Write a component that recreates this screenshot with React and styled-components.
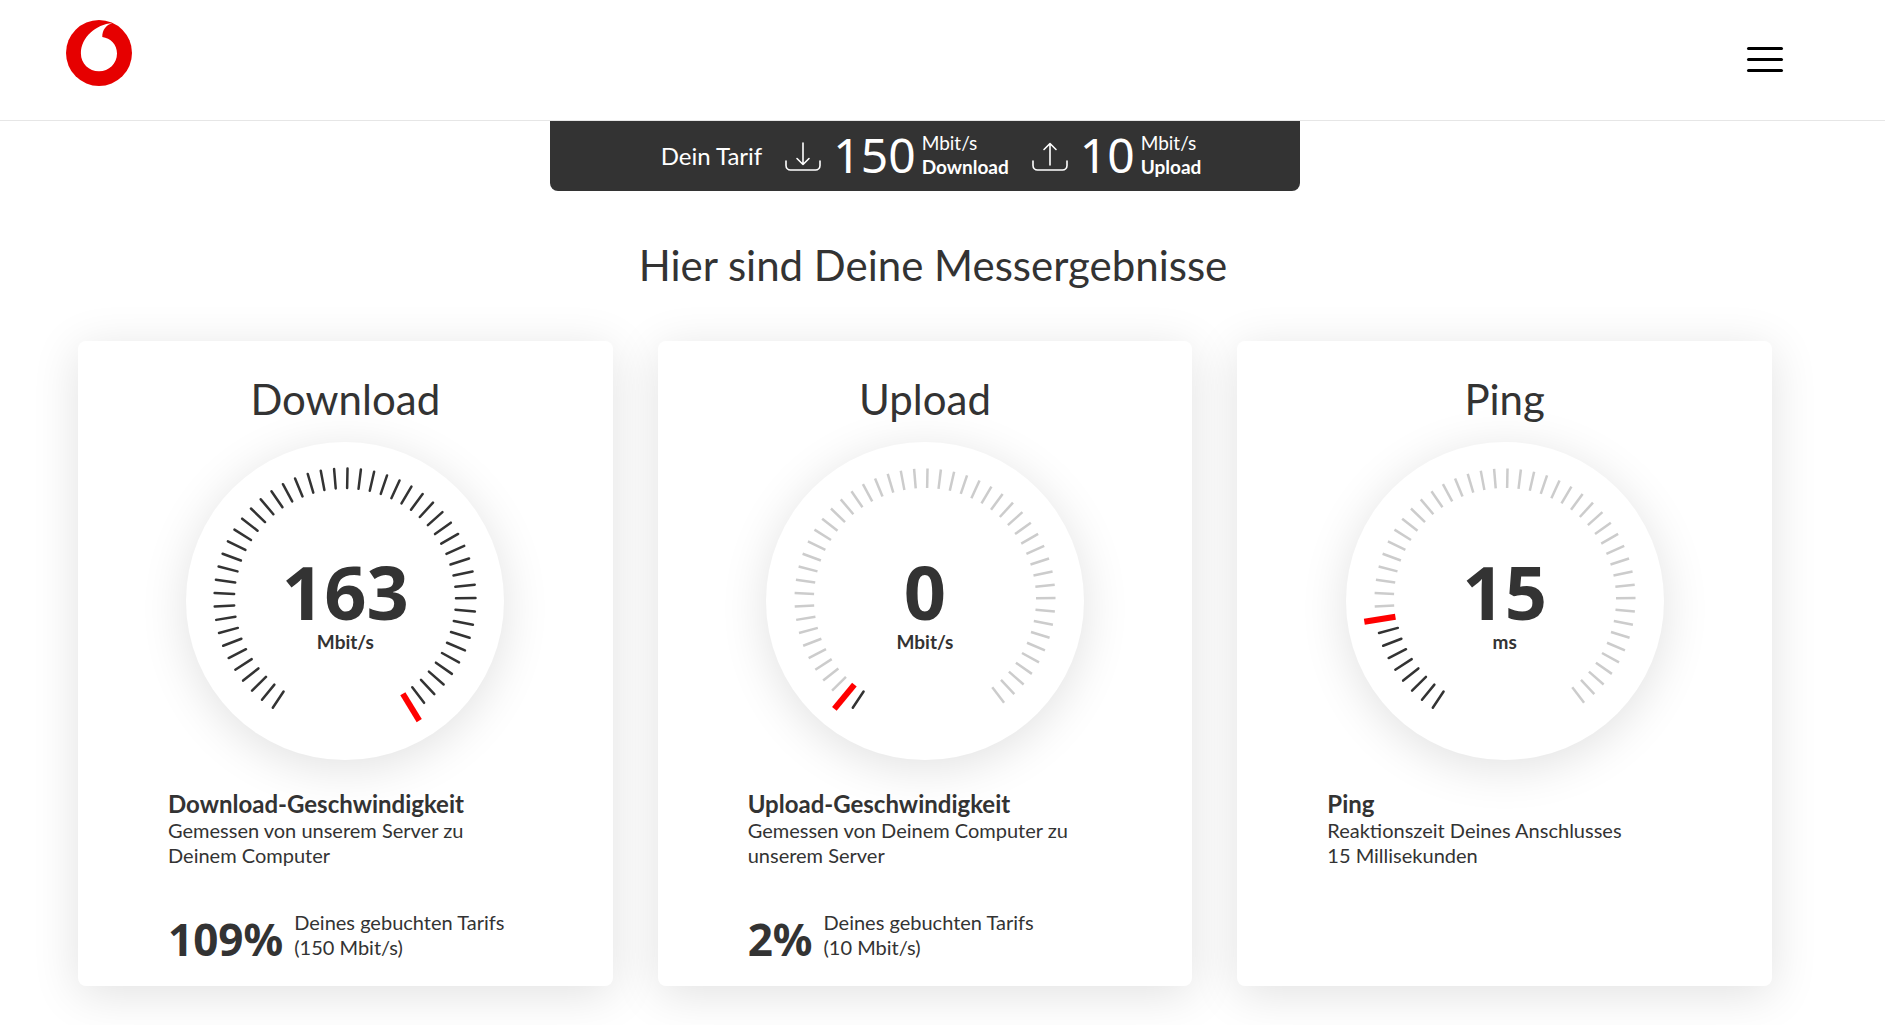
import React from 'react'
import styled, { createGlobalStyle, css } from 'styled-components';

const GlobalStyle = createGlobalStyle`
  * {
    box-sizing: border-box;
  }

  body {
    margin: 0;
    background-color: #fff;
    color: #333;
    font-family: Lato, 'Noto Sans', sans-serif;
  }

  h1, h2, h3, p {
    margin: 0;
  }
`

const numberFont = css`
  font-family: 'Noto Sans', 'Open Sans', sans-serif;
`

const Header = styled.header`
  display: flex;
  align-items: flex-start;
  justify-content: space-between;
  height: 121px;
  padding: 20px 102px 0 66px;
  border-bottom: 1px solid #e6e6e6;
`

const LogoLink = styled.a`
  display: block;

  svg {
    display: block;
    height: 66px;
    width: 66px;
  }
`

const MenuButton = styled.button`
  display: flex;
  flex-direction: column;
  gap: 8px;
  margin-top: 27px;
  padding: 0;
  border: none;
  background: none;
  cursor: pointer;

  span {
    height: 3px;
    width: 36px;
    border-radius: 2px;
    background-color: #000;
  }
`

const Main = styled.main`
  padding: 0 113px 48px 78px;
`

const TariffBar = styled.section`
  display: flex;
  align-items: center;
  justify-content: center;
  gap: 23px;
  width: 100%;
  max-width: 750px;
  height: 70px;
  margin: 0 auto;
  padding: 0 0 2px 12px;
  border-radius: 0 0 8px 8px;
  background-color: #333;
  color: #fff;
`

const TariffLabel = styled.span`
  font-size: 24px;
`

const TariffItem = styled.div`
  display: flex;
  align-items: center;

  svg {
    height: 30px;
    width: 36px;
    margin: 4px 12px 0 0;
  }
`

const TariffValue = styled.span`
  ${numberFont}
  margin-right: 6px;
  font-size: 48px;
  line-height: 68px;
`

const TariffUnit = styled.span`
  display: flex;
  flex-direction: column;
  font-size: 19px;
  line-height: 24px;
`

const Title = styled.h1`
  padding: 44px 0 46px 16px;
  font-size: 42px;
  font-weight: 400;
  line-height: 60px;
  text-align: center;
`

const Cards = styled.div`
  display: grid;
  grid-template-columns: repeat(3, 1fr);
  gap: 45px;
`

const Card = styled.section`
  min-height: 645px;
  padding: 28px 0 24px;
  border-radius: 8px;
  background-color: #fff;
  box-shadow: 0 8px 48px rgba(0, 0, 0, .12);
`

const CardTitle = styled.h2`
  margin-bottom: 13px;
  font-size: 42px;
  font-weight: 400;
  line-height: 60px;
  text-align: center;
`

const Dial = styled.div`
  display: grid;
  place-items: center;
  width: 318px;
  height: 318px;
  margin: 0 auto;
  border-radius: 50%;
  box-shadow: 0 8px 48px rgba(0, 0, 0, .12);

  > * {
    grid-area: 1 / 1;
  }
`

const Reading = styled.div`
  display: flex;
  flex-direction: column;
  align-items: center;
  padding-top: 6px;
`

const ReadingValue = styled.span`
  ${numberFont}
  font-size: 74px;
  font-weight: 700;
  line-height: 76px;
`

const ReadingUnit = styled.span`
  font-size: 19px;
  font-weight: 700;
  line-height: 24px;
`

const Details = styled.div`
  padding: 30px 16px 0 90px;
`

const DetailTitle = styled.h3`
  font-size: 24px;
  font-weight: 700;
  line-height: 28px;
`

const DetailText = styled.p`
  font-size: 20px;
  line-height: 25px;
  white-space: pre-line;
`

const Share = styled.div`
  display: flex;
  align-items: flex-end;
  gap: 11px;
  margin-top: 42px;
`

const SharePercent = styled.strong`
  ${numberFont}
  font-size: 44px;
  font-weight: 700;
  line-height: 42px;
`

const TICK_COUNT = 50
const START_ANGLE = 213.6
const STEP = 5.9

const Tick = styled.line`
  stroke: #ccc;
  stroke-width: 2.5;
  ${({ $active }) =>
    $active &&
    css`
      stroke: #333;
      stroke-linecap: round;
    `
  }
`

const Gauge = ({ position }) => {
  const angle = (i) => `rotate(${START_ANGLE + i * STEP} 159 157)`
  const ticks = Array.from({ length: TICK_COUNT }, (_, i) => i).filter((i) => i !== position)

  return (
    <svg width="318" height="318" viewBox="0 0 318 318" aria-hidden="true">
      {ticks.map((i) => (
        <Tick key={i} $active={i < position} x1="159" x2="159" y1="26.5" y2="46" transform={angle(i)} />
      ))}
      <line x1="159" x2="159" y1="14.5" y2="46" stroke="#f00" strokeWidth="6" transform={angle(position)} />
    </svg>
  )
}

const Logo = () => (
  <svg viewBox="0 0 66 66" aria-hidden="true">
    <circle cx="33" cy="33" r="33" fill="#e60000" />
    <path
      fill="#fff"
      d="M46.3 3C30 4.5 14.9 17 14.9 33.5c0 10 8.1 17.8 18.1 17.8s18-7.8 18-17.8c0-9-6.5-15.5-14.7-16.5C36.2 10 40 5 46.3 3z"
    />
  </svg>
)

const TransferIcon = ({ up }) => (
  <svg viewBox="0 0 36 30" fill="none" stroke="#fff" strokeWidth="1.6" strokeLinecap="round" strokeLinejoin="round" aria-hidden="true">
    <path d="M1 19v4.5a4.5 4.5 0 0 0 4.5 4.5h25a4.5 4.5 0 0 0 4.5-4.5V19" />
    <path d={up ? 'M18 23V1.5M12 7.5l6-6 6 6' : 'M18 1v21.5M12 16.5l6 6 6-6'} />
  </svg>
)

const tariff = [
  { value: 150, label: 'Download' },
  { value: 10, label: 'Upload', up: true },
]

const results = [
  {
    name: 'Download',
    value: 163,
    unit: 'Mbit/s',
    position: 50,
    title: 'Download-Geschwindigkeit',
    text: 'Gemessen von unserem Server zu\nDeinem Computer',
    percent: '109%',
    booked: '(150 Mbit/s)',
  },
  {
    name: 'Upload',
    value: 0,
    unit: 'Mbit/s',
    position: 1,
    title: 'Upload-Geschwindigkeit',
    text: 'Gemessen von Deinem Computer zu\nunserem Server',
    percent: '2%',
    booked: '(10 Mbit/s)',
  },
  {
    name: 'Ping',
    value: 15,
    unit: 'ms',
    position: 8,
    title: 'Ping',
    text: 'Reaktionszeit Deines Anschlusses\n15 Millisekunden',
  },
]

const ResultCard = ({ result }) => (
  <Card>
    <CardTitle>{result.name}</CardTitle>
    <Dial>
      <Gauge position={result.position} />
      <Reading>
        <ReadingValue>{result.value}</ReadingValue>
        <ReadingUnit>{result.unit}</ReadingUnit>
      </Reading>
    </Dial>
    <Details>
      <DetailTitle>{result.title}</DetailTitle>
      <DetailText>{result.text}</DetailText>
      {result.percent && (
        <Share>
          <SharePercent>{result.percent}</SharePercent>
          <DetailText>{`Deines gebuchten Tarifs\n${result.booked}`}</DetailText>
        </Share>
      )}
    </Details>
  </Card>
)

const App = () => {
  return (
    <>
      <GlobalStyle />
      <Header>
        <LogoLink href="/" aria-label="Startseite">
          <Logo />
        </LogoLink>
        <MenuButton type="button" aria-label="Menü">
          <span />
          <span />
          <span />
        </MenuButton>
      </Header>
      <Main>
        <TariffBar>
          <TariffLabel>Dein Tarif</TariffLabel>
          {tariff.map(({ value, label, up }) => (
            <TariffItem key={label}>
              <TransferIcon up={up} />
              <TariffValue>{value}</TariffValue>
              <TariffUnit>
                Mbit/s
                <strong>{label}</strong>
              </TariffUnit>
            </TariffItem>
          ))}
        </TariffBar>
        <Title>Hier sind Deine Messergebnisse</Title>
        <Cards>
          {results.map((result) => (
            <ResultCard key={result.name} result={result} />
          ))}
        </Cards>
      </Main>
    </>
  )
}

export default App
